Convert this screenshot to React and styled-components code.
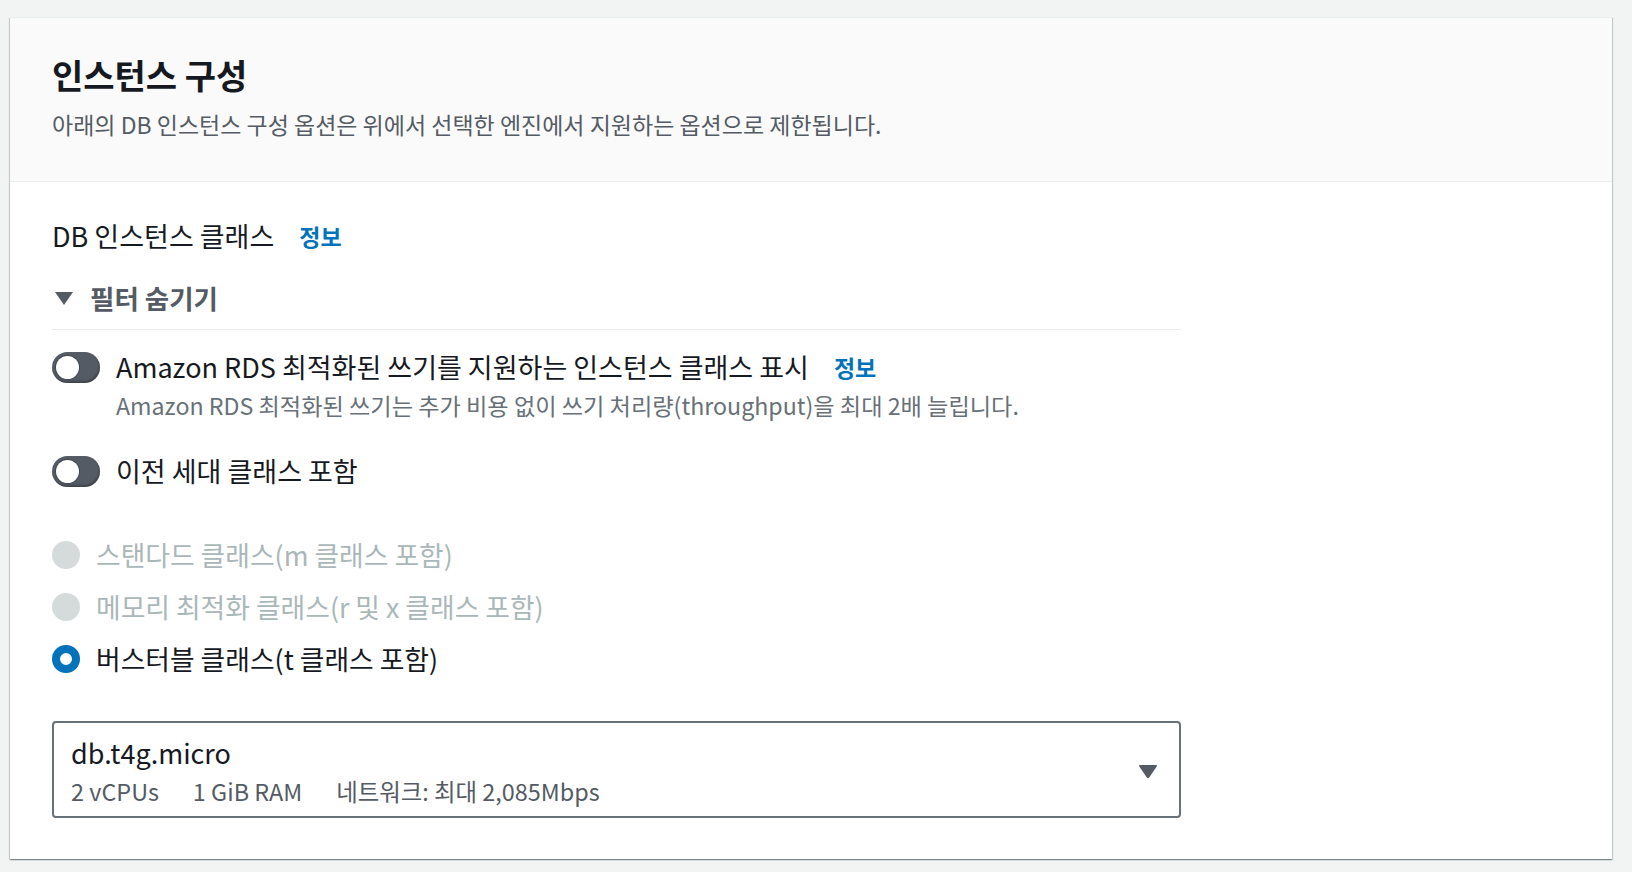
import React from "react";
import styled, { createGlobalStyle } from "styled-components";

const Global = createGlobalStyle`
  html, body { margin: 0; padding: 0; background: #f2f3f3; }
  body { font-family: "Noto Sans CJK KR", "Noto Sans", sans-serif; color: #16191f; }
  * { box-sizing: border-box; }
`;

const Page = styled.div`
  padding: 17px 20px 13px 10px;
  min-height: 872px;
`;

const Card = styled.section`
  background: #fff;
  box-shadow: 0 1px 1px 0 rgba(0, 28, 36, 0.3), 1px 1px 1px 0 rgba(0, 28, 36, 0.15),
    -1px 1px 1px 0 rgba(0, 28, 36, 0.15);
  border-top: 1px solid #eaeded;
`;

const Header = styled.header`
  background: #fafafa;
  border-bottom: 1px solid #eaeded;
  padding: 38px 42px 42px;
`;

const Title = styled.h2`
  margin: 0;
  font-size: 34px;
  line-height: 38px;
  font-weight: 700;
  color: #16191f;
`;

const Description = styled.p`
  margin: 15px 0 0;
  font-size: 23px;
  line-height: 30px;
  color: #545b64;
`;

const Body = styled.div`
  padding: 37px 42px 41px;
  display: flex;
  flex-direction: column;
`;

const Content = styled.div`
  width: 1129px;
  display: flex;
  flex-direction: column;
`;

const FieldLabel = styled.div`
  display: flex;
  align-items: center;
  gap: 25px;
  font-size: 27px;
  line-height: 34px;
  color: #16191f;
`;

const InfoLink = styled.a`
  font-size: 23px;
  font-weight: 700;
  color: #0073bb;
  text-decoration: none;
  line-height: 34px;
`;

const FilterToggle = styled.div`
  margin-top: 28px;
  display: flex;
  align-items: center;
  gap: 17px;
  font-size: 26.5px;
  line-height: 34px;
  font-weight: 700;
  color: #545b64;
  padding-left: 3px;
`;

const Triangle = styled.span`
  width: 0;
  height: 0;
  border-left: 9px solid transparent;
  border-right: 9px solid transparent;
  border-top: 13px solid #545b64;
`;

const Divider = styled.hr`
  margin: 14px 0 0;
  border: 0;
  border-top: 1px solid #e9ebed;
`;

const ToggleRow = styled.div`
  margin-top: ${(p) => p.$gap}px;
  display: flex;
  align-items: flex-start;
  gap: 16px;
`;

const Track = styled.span`
  flex: none;
  position: relative;
  width: 48px;
  height: 31px;
  margin-top: 2px;
  border-radius: 16px;
  background: #545b64;
  box-shadow: inset -1px -2px 2px rgba(0, 0, 0, 0.25);
`;

const Knob = styled.span`
  position: absolute;
  left: 4px;
  top: 4px;
  width: 23px;
  height: 23px;
  border-radius: 50%;
  background: #fff;
  box-shadow: 0 0 0 1px rgba(0, 0, 0, 0.2);
`;

const ToggleText = styled.div`
  display: flex;
  flex-direction: column;
`;

const ToggleLabel = styled.div`
  display: flex;
  align-items: center;
  gap: 25px;
  font-size: 27px;
  line-height: 34px;
  color: #16191f;
`;

const ToggleDesc = styled.div`
  margin-top: 6px;
  font-size: 23.2px;
  line-height: 30px;
  color: #687078;
`;

const RadioGroup = styled.div`
  margin-top: 50px;
  display: flex;
  flex-direction: column;
  gap: 18px;
`;

const RadioRow = styled.label`
  display: flex;
  align-items: center;
  gap: 16px;
  font-size: 26.8px;
  line-height: 34px;
  color: ${(p) => (p.$disabled ? "#aab7b8" : "#16191f")};
`;

const RadioDot = styled.span`
  flex: none;
  width: 28px;
  height: 28px;
  border-radius: 50%;
  background: ${(p) => (p.$checked ? "#fff" : "#d5dbdb")};
  border: ${(p) => (p.$checked ? "8.5px solid #0073bb" : "none")};
`;

const Select = styled.div`
  margin-top: 45px;
  border: 2px solid #687078;
  border-radius: 4px;
  padding: 13px 21px 10px 17px;
  display: flex;
  align-items: center;
  justify-content: space-between;
`;

const SelectValue = styled.div`
  display: flex;
  flex-direction: column;
`;

const SelectMain = styled.div`
  font-size: 27px;
  line-height: 34px;
  color: #16191f;
`;

const SelectTags = styled.div`
  margin-top: 6px;
  display: flex;
  gap: 34px;
  font-size: 23.4px;
  line-height: 30px;
  color: #545b64;
`;

const Caret = styled.svg`
  width: 20px;
  height: 15px;
  flex: none;
`;

export default function App() {
  return (
    <>
      <Global />
      <Page>
        <Card>
          <Header>
            <Title>인스턴스 구성</Title>
            <Description>
              아래의 DB 인스턴스 구성 옵션은 위에서 선택한 엔진에서 지원하는 옵션으로 제한됩니다.
            </Description>
          </Header>
          <Body>
            <Content>
              <FieldLabel>
                DB 인스턴스 클래스 <InfoLink href="#">정보</InfoLink>
              </FieldLabel>
              <FilterToggle>
                <Triangle />
                필터 숨기기
              </FilterToggle>
              <Divider />
              <ToggleRow $gap={20}>
                <Track>
                  <Knob />
                </Track>
                <ToggleText>
                  <ToggleLabel>
                    Amazon RDS 최적화된 쓰기를 지원하는 인스턴스 클래스 표시
                    <InfoLink href="#">정보</InfoLink>
                  </ToggleLabel>
                  <ToggleDesc>
                    Amazon RDS 최적화된 쓰기는 추가 비용 없이 쓰기 처리량(throughput)을 최대 2배 늘립니다.
                  </ToggleDesc>
                </ToggleText>
              </ToggleRow>
              <ToggleRow $gap={34}>
                <Track>
                  <Knob />
                </Track>
                <ToggleText>
                  <ToggleLabel>이전 세대 클래스 포함</ToggleLabel>
                </ToggleText>
              </ToggleRow>
              <RadioGroup>
                <RadioRow $disabled>
                  <RadioDot />
                  스탠다드 클래스(m 클래스 포함)
                </RadioRow>
                <RadioRow $disabled>
                  <RadioDot />
                  메모리 최적화 클래스(r 및 x 클래스 포함)
                </RadioRow>
                <RadioRow>
                  <RadioDot $checked />
                  버스터블 클래스(t 클래스 포함)
                </RadioRow>
              </RadioGroup>
              <Select>
                <SelectValue>
                  <SelectMain>db.t4g.micro</SelectMain>
                  <SelectTags>
                    <span>2 vCPUs</span>
                    <span>1 GiB RAM</span>
                    <span>네트워크: 최대 2,085Mbps</span>
                  </SelectTags>
                </SelectValue>
                <Caret viewBox="0 0 20 15">
                  <path d="M2 1 H18 Q19.5 1 18.7 2.4 L11.2 13.6 Q10 15 8.8 13.6 L1.3 2.4 Q0.5 1 2 1 Z" fill="#545b64" />
                </Caret>
              </Select>
            </Content>
          </Body>
        </Card>
      </Page>
    </>
  );
}
